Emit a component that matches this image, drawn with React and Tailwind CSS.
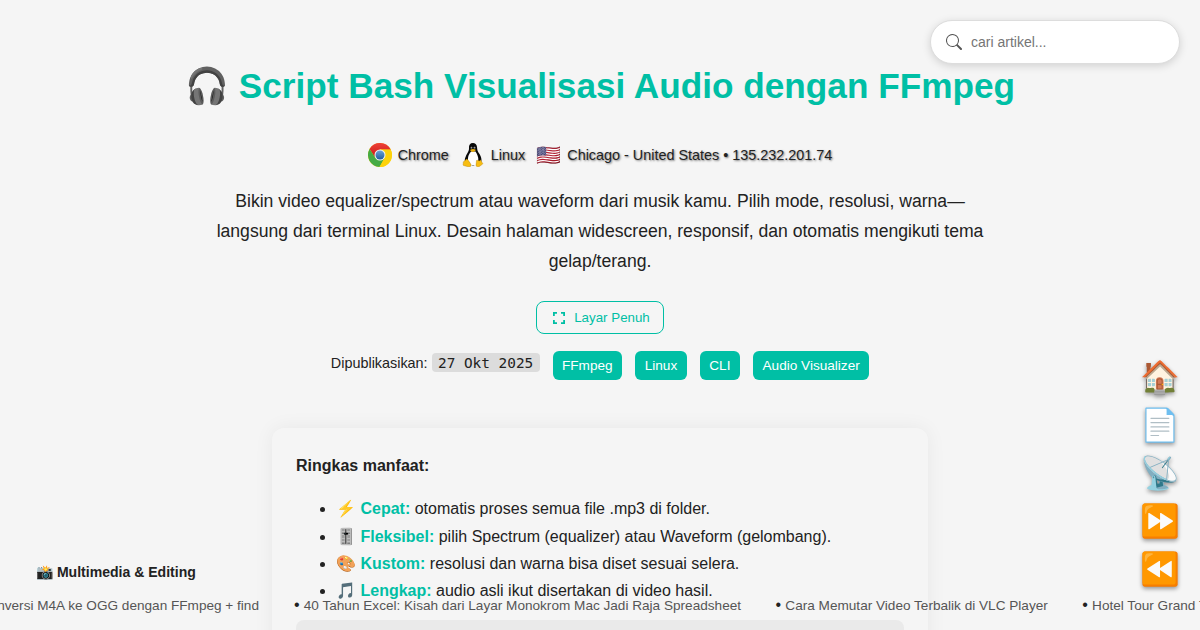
import { BsSearch } from 'react-icons/bs';

function ChromeLogo() {
  return (
    <svg viewBox="0 0 48 48" className="size-6">
      <defs>
        <linearGradient id="cr" x1="0" y1="0" x2="0" y2="1"><stop offset="0" stopColor="#ee4038" /><stop offset="1" stopColor="#c81818" /></linearGradient>
        <linearGradient id="cb" x1="0" y1="0" x2="0" y2="1"><stop offset="0" stopColor="#6ba4d8" /><stop offset="1" stopColor="#1f5c9f" /></linearGradient>
      </defs>
      <circle cx="24" cy="24" r="24" fill="#fdd20a" />
      <path d="M3.2 12A24 24 0 0 1 45.5 13.5L24 13 14.5 29.5Z" fill="url(#cr)" />
      <path d="M3.2 12A24 24 0 0 0 23 48L33.5 29.5 14.5 29.5Z" fill="#45ab45" />
      <path d="M24 13H45.3A24 24 0 0 1 23 48L33.5 29.5Z" fill="#fdd20a" />
      <circle cx="24" cy="24" r="11" fill="#f5f5f5" />
      <circle cx="24" cy="24" r="9" fill="url(#cb)" />
    </svg>
  );
}

function TuxLogo() {
  return (
    <svg viewBox="0 0 48 48" className="size-6">
      <path d="M24 0C18 0 15.5 4 16 10C16.5 17 12 20 9.5 27C7 32 7 36 9 40L24 45L39 41C42.5 36 41 28 37 22C33 17 32.5 14 32 8C31.5 3 28 0 24 0Z" fill="#080808" />
      <path d="M20 17C15 23 13 29 14 36L20 44H30L34 37C36 29 32 22 29 17Z" fill="#fff" />
      <ellipse cx="21" cy="9.5" rx="1.6" ry="2.1" fill="#ccc" />
      <ellipse cx="27" cy="9.5" rx="1.8" ry="2.2" fill="#ccc" />
      <circle cx="21.6" cy="10" r="1.2" fill="#111" />
      <circle cx="26.4" cy="10" r="1.2" fill="#111" />
      <path d="M18 14Q24 9.5 30 14Q26 18.5 23 18Q20 17 18 14Z" fill="#e9ad0c" />
      <path d="M11 32C14 32 18 40 20 43C21 47 18 48 14 47.5L5 45C3 44 5 42 4.5 39C4 36 8 37 9 34Z" fill="#f7bd12" stroke="#a87500" strokeWidth=".7" />
      <path d="M31 35C33 33 37 38 39 34C41 34 40 38 43 40C45 42 42 43 38 46C35 49 30 48 30 44Z" fill="#f7bd12" stroke="#a87500" strokeWidth=".7" />
    </svg>
  );
}

const tags = ['FFmpeg', 'Linux', 'CLI', 'Audio Visualizer'];
const benefits = [
  ['⚡', 'Cepat:', 'otomatis proses semua file .mp3 di folder.'],
  ['🎚️', 'Fleksibel:', 'pilih Spectrum (equalizer) atau Waveform (gelombang).'],
  ['🎨', 'Kustom:', 'resolusi dan warna bisa diset sesuai selera.'],
  ['🎵', 'Lengkap:', 'audio asli ikut disertakan di video hasil.'],
];
const headlines = [
  'Konversi M4A ke OGG dengan FFmpeg + find',
  '40 Tahun Excel: Kisah dari Layar Monokrom Mac Jadi Raja Spreadsheet',
  'Cara Memutar Video Terbalik di VLC Player',
  'Hotel Tour Grand Tjokro',
];

export default function App() {
  return (
    <div className="relative h-[630px] w-full overflow-hidden bg-[#f5f5f5] font-['Liberation_Sans',Arial,sans-serif] text-[#222]">
      <header className="flex flex-col items-center pt-14 text-center">
        <h1 className="h-[60px] text-[35.2px] leading-[60px] font-bold whitespace-nowrap text-[#00bfa5]">🎧 Script Bash Visualisasi Audio dengan FFmpeg</h1>
        <div className="mt-[27px] flex h-6 items-center text-[14.4px] leading-6 whitespace-nowrap [text-shadow:1px_1px_2px_rgba(0,0,0,0.5)]">
          <ChromeLogo /><span className="mr-3 ml-1.5">Chrome</span>
          <TuxLogo /><span className="mr-2.5 ml-1.5">Linux</span>
          <span className="flex w-[27px] justify-center text-[20px] leading-6 [text-shadow:none]">🇺🇸</span><span className="ml-[5px]">Chicago - United States • 135.232.201.74</span>
        </div>
        <p className="mt-5 w-[780px] text-[17.6px] leading-[29.92px]">Bikin video equalizer/spectrum atau waveform dari musik kamu. Pilih mode, resolusi, warna—langsung dari terminal Linux. Desain halaman widescreen, responsif, dan otomatis mengikuti tema gelap/terang.</p>
        <button className="mt-[24.2px] flex h-[33px] w-32 items-center justify-center gap-2 rounded-lg border border-[#00bfa5] pt-px pl-[2px] text-[13.333px] text-[#00bfa5]">
          <svg viewBox="0 0 14 14" className="size-3.5" fill="none" stroke="currentColor" strokeWidth="1.8"><path d="M1.9 5V1.9H5M9 1.9h3.1V5M12.1 9v3.1H9M5 12.1H1.9V9" /></svg>
          Layar Penuh
        </button>
        <div className="mt-[17px] flex h-[29px] items-start whitespace-nowrap">
          <span className="text-[14.4px] leading-6">Dipublikasikan:</span>
          <code className="mt-0.5 ml-1 flex h-[19px] w-[108px] items-center justify-center rounded bg-[#dcdcdc] pt-[2px] font-['DejaVu_Sans_Mono',monospace] text-[14.4px]">27 Okt 2025</code>
          <div className="ml-[13px] flex gap-[13.3px]">
            {tags.map((t) => <span key={t} className="flex h-[29px] items-center rounded-md bg-[#00bfa5] px-[9.4px] pt-px text-[13.6px] text-white">{t}</span>)}
          </div>
        </div>
      </header>

      <main className="mx-auto mt-12 w-[656px] rounded-xl bg-[#f5f5f5] p-6 text-[16px] leading-[27.2px] shadow-[0_0_20px_rgba(0,0,0,0.06)]">
        <p className="font-bold">Ringkas manfaat:</p>
        <ul className="mt-[16.2px] mb-[15.8px] list-disc pl-10">
          {benefits.map(([icon, title, body]) => <li key={title}>{icon} <strong className="text-[#00bfa5]">{title}</strong> {body}</li>)}
        </ul>
        <div className="h-40 rounded-lg bg-[#eaeaea]" />
      </main>

      <label className="absolute top-5 right-5 flex h-11 w-[250px] items-center rounded-full border border-[#ddd] bg-white pl-[15px] shadow-[0_2px_8px_rgba(0,0,0,0.15)]">
        <BsSearch className="size-4 text-[#555]" />
        <input placeholder="cari artikel..." className="ml-[9px] w-44 text-[14px] outline-none placeholder:text-[#757575]" />
      </label>

      <nav className="absolute top-[353px] right-[17px] flex w-[46px] flex-col items-center">
        {['🏠', '📄', '📡', '⏩', '⏪'].map((i) => <a key={i} className="flex h-12 items-center text-[32px] leading-none [text-shadow:0_2px_4px_rgba(0,0,0,0.4)]">{i}</a>)}
      </nav>

      <div className="absolute top-[562px] left-9 text-[14.05px] leading-5 font-bold whitespace-nowrap">📸 Multimedia &amp; Editing</div>
      <div className="absolute top-[596px] right-[941px] text-[13.6px] leading-5 whitespace-nowrap text-[#555]">{headlines[0]}</div>
      <div className="absolute top-[596px] left-[294px] flex gap-[34.5px] text-[13.6px] leading-5 whitespace-nowrap text-[#555]">
        {headlines.slice(1).map((h) => <span key={h} className="flex"><span className="-mt-px w-[9.8px] text-[16px] text-[#222]">•</span>{h}</span>)}
      </div>
    </div>
  );
}
